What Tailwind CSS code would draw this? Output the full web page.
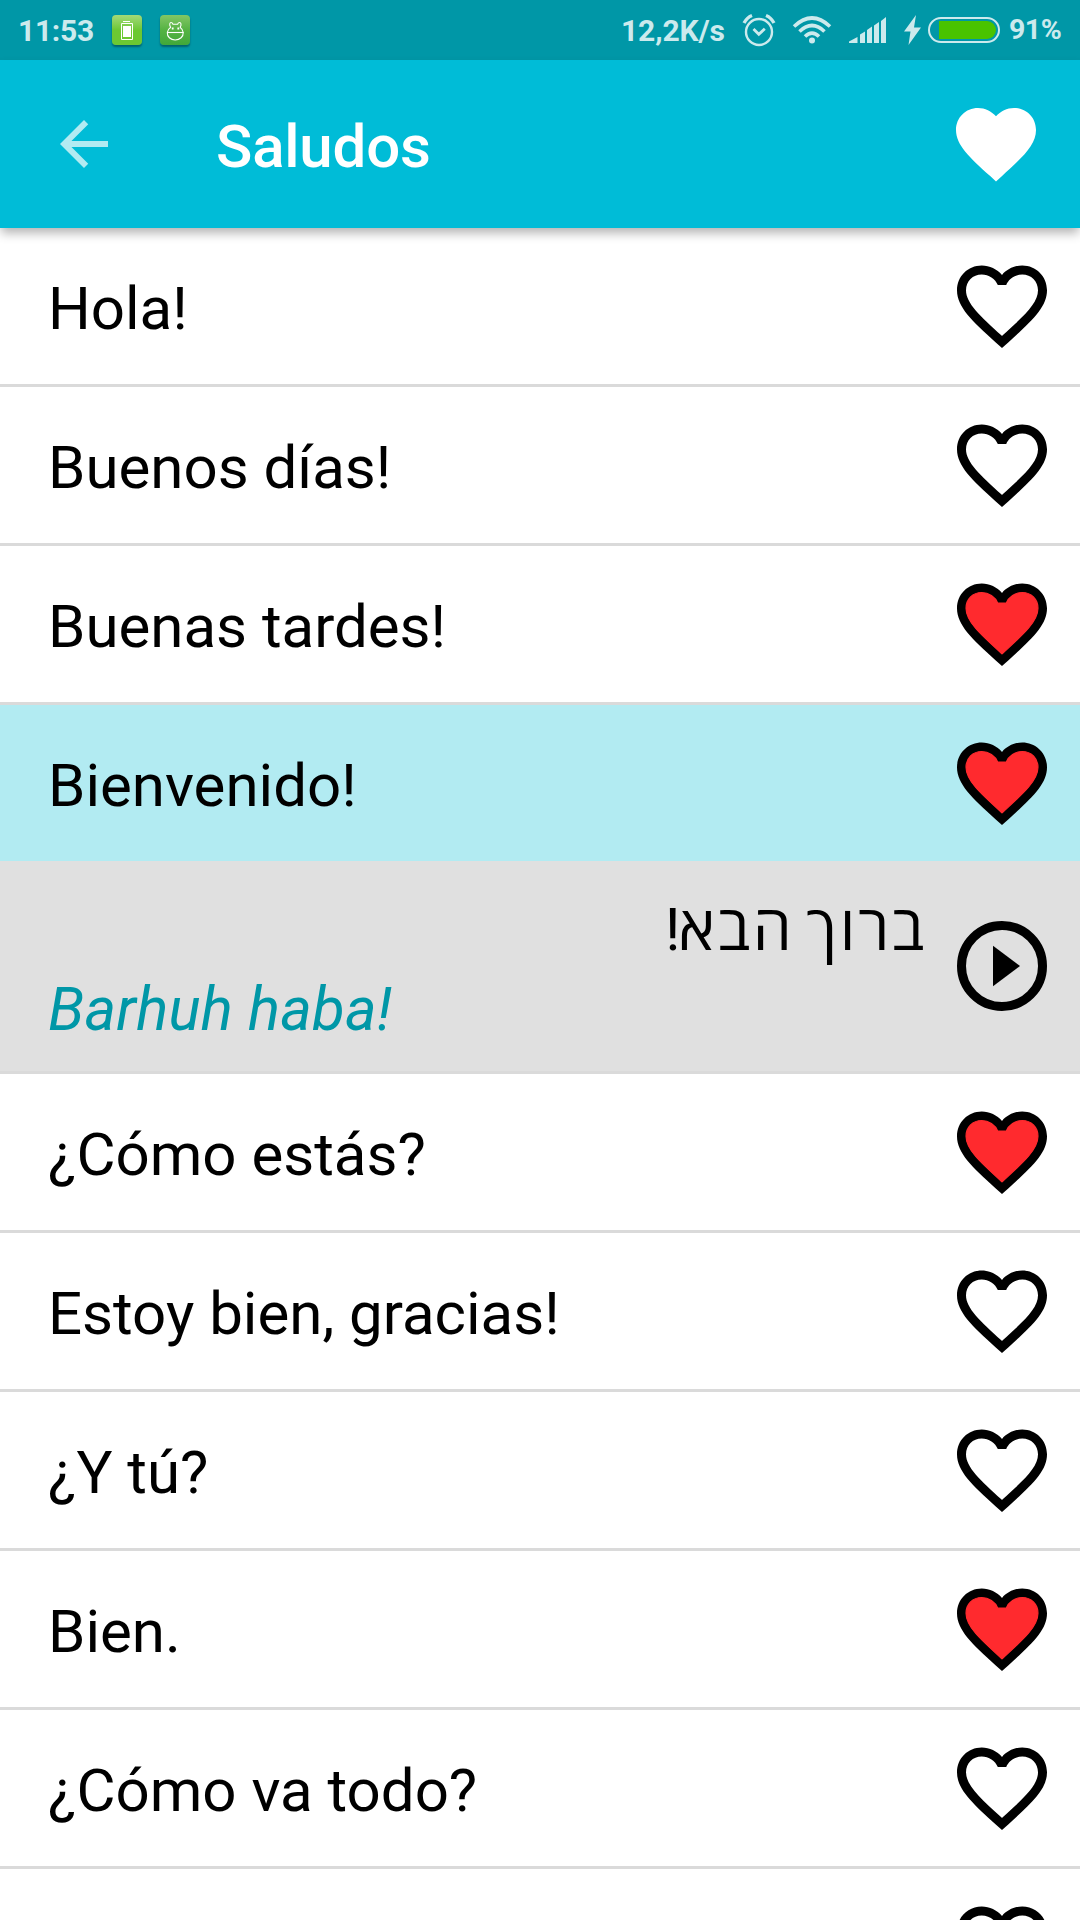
<!DOCTYPE html>
<html lang="es">
<head>
  <meta charset="UTF-8">
  <meta name="viewport" content="width=device-width, initial-scale=1.0">
  <title>Saludos</title>
  <script src="https://cdn.jsdelivr.net/npm/@tailwindcss/browser@4"></script>
</head>
<body class="bg-white text-black font-[Roboto,'Open_Sans',sans-serif] h-screen overflow-hidden flex flex-col">

  <!-- Shared icons -->
  <svg class="hidden">
    <symbol id="heart" viewBox="0 0 24 24">
      <path d="M12 21.35l-1.45-1.32C5.4 15.36 2 12.28 2 8.5 2 5.42 4.42 3 7.5 3c1.74 0 3.41.81 4.5 2.09C13.09 3.81 14.76 3 16.5 3 19.58 3 22 5.42 22 8.5c0 3.78-3.4 6.86-8.55 11.54L12 21.35z"/>
    </symbol>
    <symbol id="heart-outline" viewBox="0 0 24 24">
      <path d="M16.5 3c-1.74 0-3.41.81-4.5 2.09C10.91 3.81 9.24 3 7.5 3 4.42 3 2 5.42 2 8.5c0 3.78 3.4 6.86 8.55 11.54L12 21.35l1.45-1.32C18.6 15.36 22 12.28 22 8.5 22 5.42 19.58 3 16.5 3zm-4.4 15.55l-.1.1-.1-.1C7.14 14.24 4 11.39 4 8.5 4 6.5 5.5 5 7.5 5c1.54 0 3.04.99 3.57 2.36h1.87C13.46 5.99 14.96 5 16.5 5c2 0 3.5 1.5 3.5 3.5 0 2.89-3.14 5.74-7.9 10.05z"/>
    </symbol>
    <symbol id="heart-red" viewBox="0 0 24 24">
      <path d="M12 21.35l-1.45-1.32C5.4 15.36 2 12.28 2 8.5 2 5.42 4.42 3 7.5 3c1.74 0 3.41.81 4.5 2.09C13.09 3.81 14.76 3 16.5 3 19.58 3 22 5.42 22 8.5c0 3.78-3.4 6.86-8.55 11.54L12 21.35z"/>
      <path fill="#ff2a2e" stroke="#ff2a2e" stroke-width=".25" d="M12.1 18.55l-.1.1-.1-.1C7.14 14.24 4 11.39 4 8.5 4 6.5 5.5 5 7.5 5c1.54 0 3.04.99 3.57 2.36h1.87C13.46 5.99 14.96 5 16.5 5c2 0 3.5 1.5 3.5 3.5 0 2.89-3.14 5.74-7.9 10.05z"/>
    </symbol>
  </svg>

  <!-- Status Bar -->
  <div class="h-[60px] shrink-0 bg-[#0097a7] text-[#cceaed] text-[30px] leading-none font-bold flex items-center justify-between pl-[18px] pr-[18px]">
    <div class="flex items-center">
      <span class="w-[94px] pt-px tracking-[-0.3px]">11:53</span>
      <div class="w-[30px] h-[30px] rounded-[4px] bg-linear-to-b from-[#a3d977] to-[#6cc832] to-50% shadow-[0_2px_2px_rgba(0,0,0,0.35)]">
        <svg class="w-[30px] h-[30px]" viewBox="0 0 30 30" fill="none" stroke="#fff">
          <path d="M11 6.5h7M9.5 8.5h11v16h-11z"/>
          <path fill="#fff" stroke="none" d="M11 11h8v11h-8z"/>
        </svg>
      </div>
      <div class="ml-[18px] w-[30px] h-[30px] rounded-[4px] bg-linear-to-b from-[#82c665] via-[#55b343] via-50% to-[#40a83a] shadow-[0_2px_2px_rgba(0,0,0,0.35)]">
        <svg class="w-[30px] h-[30px]" viewBox="0 0 30 30" fill="none" stroke="#fff" stroke-width="1.1">
          <path d="M7 17.5h16.5"/>
          <path d="M10.5 12.5Q8 14 7.3 17.500C7 21.5 10.5 25 15.2 25s8.3-3.5 8-7.5Q22.5 14 20.3 12.5"/>
          <path d="M10.5 13V12C9 9.5 9.8 7.500 11 7.500q1.300 0 2 1.700h4.600q.7-1.700 2-1.700c1.300 0 2.100 2 .7 4.500v1"/>
          <path d="M12.700 12.500v2M18.300 12.500v2" stroke-width="1.800"/>
        </svg>
      </div>
    </div>
    <div class="flex items-center">
      <span class="w-[104px] pt-px tracking-[-0.1px]">12,2K/s</span>
      <!-- Alarm -->
      <svg class="ml-[17px] w-[34px] h-[34px]" viewBox="0 0 34 34" fill="none" stroke="#cceaed">
        <circle cx="17" cy="19" r="13" stroke-width="2.4"/>
        <path d="M11.5 16l5.3 5.3 6-5.5" stroke-width="2.8"/>
        <path d="M2 10Q5 4.500 10 2.500M32 10Q29 4.500 24 2.500" stroke-width="3.400"/>
      </svg>
      <!-- Wifi -->
      <svg class="ml-[16px] w-[40px] h-[30px]" viewBox="0 0 40 30" fill="none" stroke="#cceaed" stroke-width="3.600">
        <path d="M2 11.500Q20-5.500 38 11.500M7.500 16.500Q20 4.500 32.500 16.500M13 21.500Q20 14.500 27 21.500"/>
        <circle cx="20" cy="25.500" r="3" fill="#cceaed" stroke="none"/>
      </svg>
      <!-- Signal -->
      <svg class="ml-[17px] w-[38px] h-[26px]" viewBox="0 0 38 26" fill="#cceaed">
        <path d="M0 26v-1.500L8.500 20v6zM11 26v-8.500l5-3V26zM18 26V13l5-3.500V26zM25 26V8.500L30 5v21zM32 26V4l5-4v26z"/>
      </svg>
      <!-- Charging battery -->
      <svg class="ml-[17px] w-[17px] h-[30px]" viewBox="0 0 17 30" fill="#cceaed">
        <path d="M12 0L0 16.500h6.500L4.500 30 17 12.500h-7z"/>
      </svg>
      <svg class="ml-[7px] w-[72px] h-[26px]" viewBox="0 0 72 26">
        <rect x="1" y="1" width="70" height="24" rx="12" fill="none" stroke="#cceaed" stroke-width="2"/>
        <path fill="#49c300" d="M11 4h48a9 9 0 0 1 0 18H11z"/>
      </svg>
      <span class="ml-[9px] w-[53px] pt-px text-[28.5px] tracking-[-0.5px]">91%</span>
    </div>
  </div>

  <!-- App Bar -->
  <header class="relative z-10 h-[168px] shrink-0 bg-[#00bcd7] flex items-center pl-12 pr-9 shadow-[0_6px_10px_-1px_rgba(0,0,0,0.3)]">
    <svg class="w-[72px] h-[72px] fill-[#b2ebf2]" viewBox="0 0 24 24">
      <path d="M20 11H7.830l5.590-5.590L12 4l-8 8 8 8 1.410-1.410L7.830 13H20v-2z"/>
    </svg>
    <h1 class="ml-24 pt-[5px] flex-1 text-white text-[60px] leading-[71px] font-medium tracking-[-0.2px]">Saludos</h1>
    <svg class="w-24 h-24 fill-white"><use href="#heart"/></svg>
  </header>

  <!-- Phrase List -->
  <ul class="flex-1 min-h-0 overflow-hidden text-[60px] leading-[71px]">
    <li class="h-[159px] border-b-3 border-[#dadada] flex items-center justify-between pl-12 pr-6">
      <span class="pt-[5px]">Hola!</span>
      <svg class="w-[108px] h-[108px]"><use href="#heart-outline"/></svg>
    </li>
    <li class="h-[159px] border-b-3 border-[#dadada] flex items-center justify-between pl-12 pr-6">
      <span class="pt-[5px]">Buenos días!</span>
      <svg class="w-[108px] h-[108px]"><use href="#heart-outline"/></svg>
    </li>
    <li class="h-[159px] border-b-3 border-[#dadada] flex items-center justify-between pl-12 pr-6">
      <span class="pt-[5px]">Buenas tardes!</span>
      <svg class="w-[108px] h-[108px]"><use href="#heart-red"/></svg>
    </li>

    <!-- Selected phrase with its translation -->
    <li>
      <div class="h-[156px] bg-[#b2ebf2] flex items-center justify-between pl-12 pr-6">
        <span class="pt-[5px]">Bienvenido!</span>
        <svg class="w-[108px] h-[108px]"><use href="#heart-red"/></svg>
      </div>
      <div class="h-[213px] bg-[#e0e0e0] border-b-3 border-[#dadada] flex items-center pl-12 pr-6">
        <div class="flex-1 flex flex-col pr-[21px] pt-[6px] gap-[10px]">
          <p class="h-[71px] text-[62px] font-medium tracking-[2.7px] [word-spacing:-6px]" dir="rtl" lang="he">ברוך הבא<span class="text-[60px] font-normal tracking-normal -mr-[2px]">!</span></p>
          <p class="italic text-[#0097a7] tracking-[0.2px]">Barhuh haba!</p>
        </div>
        <svg class="w-[108px] h-[108px]" viewBox="0 0 24 24">
          <path d="M10 16.500l6-4.500-6-4.500v9z"/>
          <circle cx="12" cy="12" r="9" fill="none" stroke="#000" stroke-width="2"/>
        </svg>
      </div>
    </li>

    <li class="h-[159px] border-b-3 border-[#dadada] flex items-center justify-between pl-12 pr-6">
      <span class="pt-[5px]">¿Cómo estás?</span>
      <svg class="w-[108px] h-[108px]"><use href="#heart-red"/></svg>
    </li>
    <li class="h-[159px] border-b-3 border-[#dadada] flex items-center justify-between pl-12 pr-6">
      <span class="pt-[5px]">Estoy bien, gracias!</span>
      <svg class="w-[108px] h-[108px]"><use href="#heart-outline"/></svg>
    </li>
    <li class="h-[159px] border-b-3 border-[#dadada] flex items-center justify-between pl-12 pr-6">
      <span class="pt-[5px]">¿Y tú?</span>
      <svg class="w-[108px] h-[108px]"><use href="#heart-outline"/></svg>
    </li>
    <li class="h-[159px] border-b-3 border-[#dadada] flex items-center justify-between pl-12 pr-6">
      <span class="pt-[5px]">Bien.</span>
      <svg class="w-[108px] h-[108px]"><use href="#heart-red"/></svg>
    </li>
    <li class="h-[159px] border-b-3 border-[#dadada] flex items-center justify-between pl-12 pr-6">
      <span class="pt-[5px]">¿Cómo va todo?</span>
      <svg class="w-[108px] h-[108px]"><use href="#heart-outline"/></svg>
    </li>
    <!-- Cut off by the screen edge -->
    <li class="h-[54px] flex items-start justify-end pt-6 pr-6 overflow-hidden">
      <svg class="w-[108px] h-[108px] shrink-0"><use href="#heart-outline"/></svg>
    </li>
  </ul>

</body>
</html>
